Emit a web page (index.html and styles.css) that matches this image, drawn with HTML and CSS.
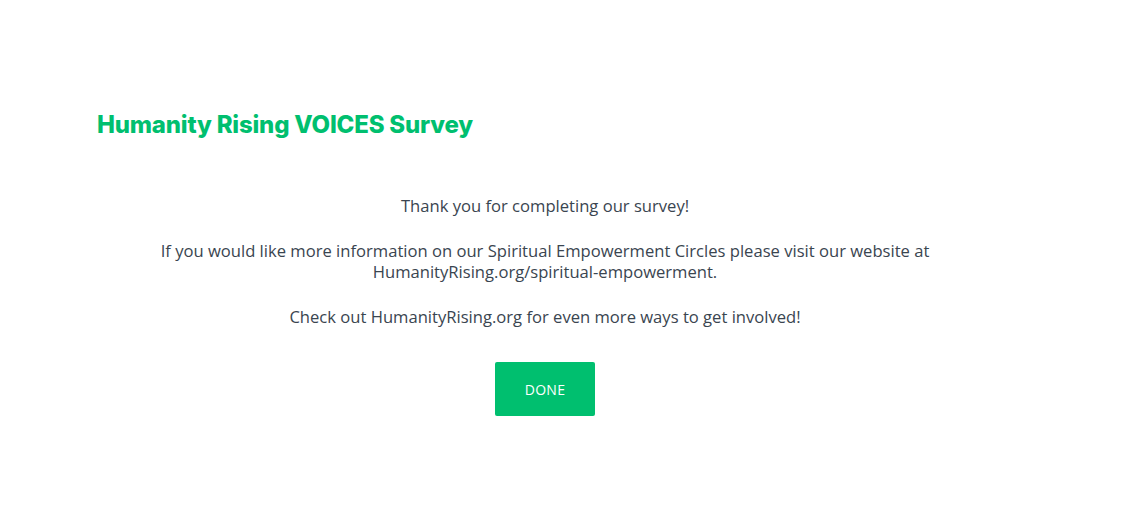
FILE: index.html
```html
<!DOCTYPE html>
<html>
<head>
<meta charset="utf-8">
<link rel="stylesheet" href="styles.css">
</head>
<body>
<main class="page">
  <h1 class="title">Humanity Rising VOICES Survey</h1>
  <div class="message">
    <p>Thank you for completing our survey!</p>
    <p>If you would like more information on our Spiritual Empowerment Circles please visit our website at HumanityRising.org/spiritual-empowerment.</p>
    <p>Check out HumanityRising.org for even more ways to get involved!</p>
  </div>
  <div class="actions">
    <button class="done">DONE</button>
  </div>
</main>
</body>
</html>
```
FILE: styles.css
```css
html, body {
  margin: 0;
  padding: 0;
  background: #ffffff;
}
.page {
  width: 896px;
  margin: 0 auto 0 97px;
  padding-top: 109px;
  font-family: "Open Sans", "Liberation Sans", sans-serif;
  color: #3a4550;
}
.title {
  margin: 0;
  font-family: "Inter", "Liberation Sans", sans-serif;
  font-weight: 800;
  font-size: 24px;
  line-height: 32px;
  color: #00bf6f;
  letter-spacing: -0.2px;
}
.message {
  margin-top: 54px;
  text-align: center;
  font-size: 16.6px;
  line-height: 21px;
  padding: 0 40px;
}
.message p {
  margin: 0 0 24px 0;
}
.message p:last-child {
  margin-bottom: 0;
}
.actions {
  display: flex;
  justify-content: center;
  margin-top: 35px;
}
.done {
  width: 100px;
  height: 54px;
  border: none;
  border-radius: 2px;
  background: #00bf6f;
  color: #ffffff;
  font-family: "Open Sans", "Liberation Sans", sans-serif;
  font-size: 14px;
  letter-spacing: 0.3px;
}
```
